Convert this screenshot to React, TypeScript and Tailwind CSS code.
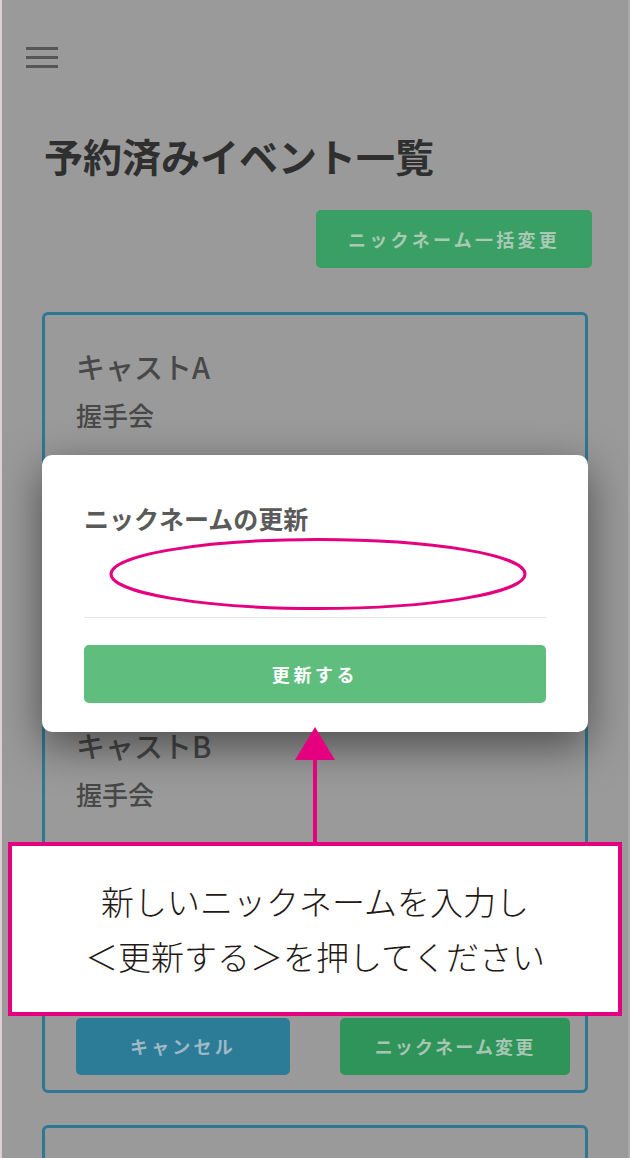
import React from "react";

const FONT = { fontFamily: '"Noto Sans CJK JP", "Noto Sans", sans-serif' };

function Hamburger() {
  return (
    <div className="flex w-[32px] flex-col gap-[6px]">
      <div className="h-[3px] bg-[#575757]" />
      <div className="h-[3px] bg-[#575757]" />
      <div className="h-[3px] bg-[#575757]" />
    </div>
  );
}

function Annotations() {
  return (
    <>
      {/* ellipse around the input */}
      <svg className="absolute left-[104px] top-[535px]" width="424" height="78" viewBox="0 0 424 78">
        <ellipse cx="212" cy="39" rx="207" ry="34.5" fill="none" stroke="#e4007f" strokeWidth="3" />
      </svg>

      {/* arrow pointing at the update button */}
      <svg className="absolute left-[291px] top-[726px]" width="44" height="118" viewBox="0 0 44 118">
        <polygon points="22,1 42,34 2,34" fill="#e4007f" />
        <rect x="20" y="33" width="4" height="85" fill="#e4007f" />
      </svg>

      <div className="absolute left-[6px] top-[842px] flex h-[174px] w-[614px] flex-col items-center justify-center border-[4px] border-[#e4007f] bg-white text-[33px] leading-[55px] font-light text-[#231815]">
        <p>新しいニックネームを入力し</p>
        <p>＜更新する＞を押してください</p>
      </div>
    </>
  );
}

function NicknameDialog() {
  return (
    <div className="absolute left-[40px] top-[455px] flex h-[277px] w-[546px] flex-col rounded-[10px] bg-white px-[42px] pt-[45px] shadow-[0_14px_44px_rgba(0,0,0,0.5)]">
      <h3 className="text-[25px] leading-[36px] font-bold text-[#5a5a5a]">ニックネームの更新</h3>
      <div className="h-[82px] border-b border-[#e6e6e6]" />
      <button className="mt-[27px] h-[58px] rounded-[5px] bg-[#5fbd7d] text-[18px] font-bold tracking-[0.2em] text-white">
        更新する
      </button>
    </div>
  );
}

export default function App() {
  return (
    <div
      className="relative h-[1158px] w-[630px] overflow-hidden border-x-2 border-l-[#dccfd5] border-r-[#aaa6a8] bg-[#9a9a9a]"
      style={FONT}
    >
      <div className="pl-[24px] pt-[47px]">
        <Hamburger />
      </div>

      <h1 className="mt-[62px] pl-[42px] text-[39px] leading-[51px] font-bold text-[#2f2f2f]">
        予約済みイベント一覧
      </h1>

      <div className="mt-[29px] flex justify-end pr-[36px]">
        <button className="h-[58px] w-[276px] rounded-[5px] bg-[#3a9f64] text-[18px] font-bold tracking-[0.18em] text-[#a9c9b5]">
          ニックネーム一括変更
        </button>
      </div>

      <div className="mx-[40px] mt-[44px] flex flex-col gap-[32px]">
        <div className="h-[347px] rounded-[6px] border-[3px] border-[#2f7893] pl-[31px] pt-[31px] text-[#484848]">
          <p className="text-[29px] leading-[40px] font-medium">キャストA</p>
          <p className="mt-[11px] text-[26px] leading-[36px] font-medium">握手会</p>
        </div>

        <div className="flex h-[402px] flex-col rounded-[6px] border-[3px] border-[#2f7893] pb-[15px] pl-[31px] pt-[31px] text-[#484848]">
          <p className="text-[29px] leading-[40px] font-medium">キャストB</p>
          <p className="mt-[11px] text-[26px] leading-[36px] font-medium">握手会</p>
          <div className="mt-auto flex gap-[50px]">
            <button className="h-[57px] w-[214px] rounded-[5px] bg-[#2c7c98] text-[18px] font-bold tracking-[0.18em] text-[#9fb9c5]">
              キャンセル
            </button>
            <button className="h-[57px] w-[230px] rounded-[5px] bg-[#2f945a] text-[18px] font-bold tracking-[0.12em] text-[#a6c6b2]">
              ニックネーム変更
            </button>
          </div>
        </div>

        <div className="h-[200px] rounded-[6px] border-[3px] border-[#2f7893]" />
      </div>

      <NicknameDialog />
      <Annotations />
    </div>
  );
}
